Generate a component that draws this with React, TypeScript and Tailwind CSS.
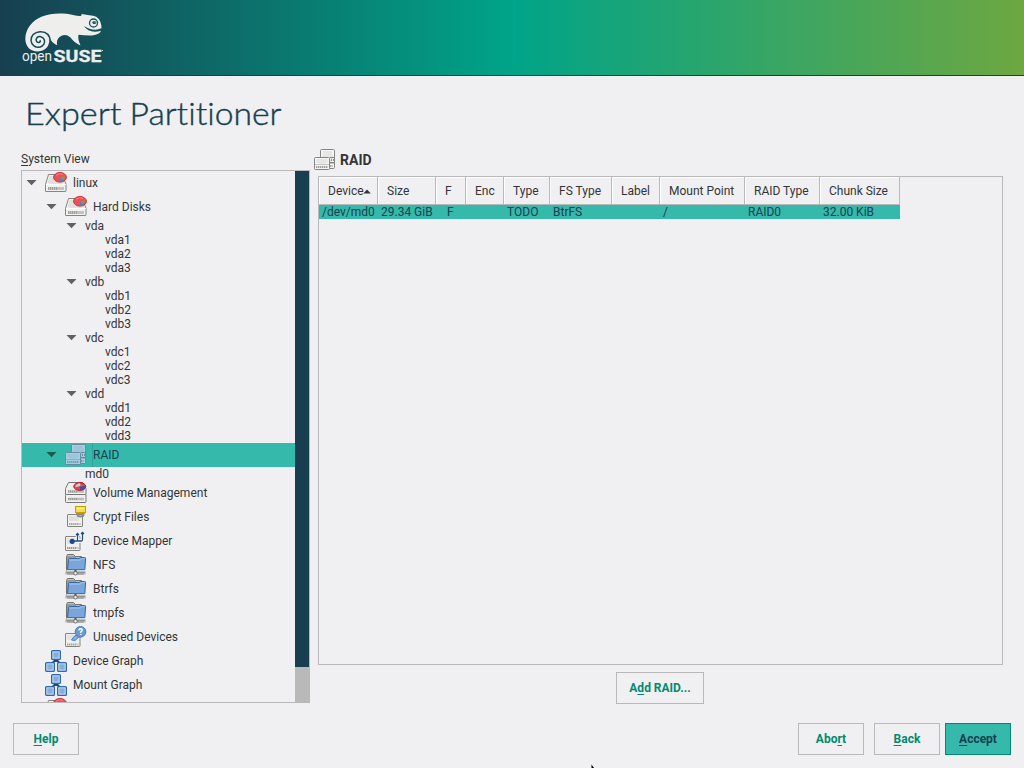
import React from "react";

type IconName = "disk" | "raid" | "volume" | "crypt" | "mapper" | "folder" | "unused" | "graph";

function Drive({ x, y, w, h }: { x: number; y: number; w: number; h: number }) {
  return (
    <g>
      <rect x={x + 0.5} y={y + 0.5} width={w - 1} height={h - 1} rx="1" fill="#f5f5f4" stroke="#858683" />
      <path d={`M${x + 3} ${y + 2}h${w - 6}l1 ${h - 10}q${-(w - 4) / 2} 4 ${-(w - 4)} 0z`} fill="#e6e7e5" />
      <path d={`M${x + 1} ${y + h - 5.5}h${w - 2}`} stroke="#c3c4c1" />
      <path d={`M${x + 2} ${y + h - 3}h${w - 4}`} stroke="#cfd0cd" strokeWidth="2" />
      <path d={`M${x + 2} ${y + h - 3}h${w - 5}`} stroke="#a2a3a0" strokeWidth="2" strokeDasharray="1 1" />
    </g>
  );
}

function RedChart({ cx, cy, rx, ry }: { cx: number; cy: number; rx: number; ry: number }) {
  return (
    <g>
      <ellipse cx={cx} cy={cy} rx={rx} ry={ry} fill="#ee5058" stroke="#d42833" />
      <path d={`M${cx} ${cy}l${rx - 1} -1q-.5 3-3 ${ry - 1}z`} fill="#7aa05e" />
      <path d={`M${cx} ${cy}l3.5 ${ry - 1}q-2.5 1-4 .5z`} fill="#4e82c0" />
      <path d={`M${cx - 4} ${cy - 2}q3-3 7-1`} stroke="#f8898d" fill="none" />
    </g>
  );
}

function Icon({ name }: { name: IconName }) {
  return (
    <svg width="24" height="24" viewBox="0 0 24 24" className="shrink-0">
      {name === "disk" && (
        <g>
          <path d="M4.500 3.500h14l3.500 10v6.500q0 .5-.5.5H2q-.5 0-.5-.5v-6.500z" fill="#f2f2ef" stroke="#858580" strokeLinejoin="round" />
          <path d="M4 12l1.500-7h12l2.500 7q-8 3-16 0z" fill="#e0e0dd" />
          <path d="M2 13.500h20" stroke="#fff" />
          <path d="M4 17.500h16" stroke="#c3c3c0" strokeWidth="3" />
          <path d="M4 17.500h10" stroke="#a0a09d" strokeWidth="3" strokeDasharray="1 1" />
          <RedChart cx={16} cy={6.3} rx={6.4} ry={4.8} />
        </g>
      )}
      {name === "raid" && (
        <g>
          <Drive x={7} y={1} w={15} h={20} />
          <path d="M17 9.500h4M17 14.500h4" stroke="#858683" />
          <path d="M18 12h3" stroke="#969794" strokeWidth="2" strokeDasharray="1 1" />
          <Drive x={1} y={9} w={16} h={13} />
        </g>
      )}
      {name === "volume" && (
        <g>
          <path d="M4.500 1.500h14l3.500 6v6H1.500v-6z" fill="#efefed" stroke="#777" />
          <rect x="1.500" y="13.500" width="20.500" height="8" rx="1" fill="#efefed" stroke="#777" />
          <path d="M4 10.500h16M4 18h16" stroke="#bbb" strokeWidth="2.500" />
          <path d="M4 10.500h10M4 18h10" stroke="#999" strokeWidth="2" strokeDasharray="1 1" />
          <ellipse cx="15.800" cy="5.500" rx="6" ry="3.900" fill="#e8444c" stroke="#b41824" />
          <path d="M15.500 5.500l6-.5q.5 3-3 4.300h-2z" fill="#3258a0" />
          <path d="M11 6.300q1-4 5-4l.5 2.800z" fill="#cdcdd4" />
        </g>
      )}
      {name === "crypt" && (
        <g>
          <path d="M3.500 10q0-.5.5-.5h14.500v11.500q0 .5-.5.5H4q-.5 0-.5-.5z" fill="#f0f0ee" stroke="#858580" />
          <path d="M5 11h10v5H5z" fill="#dfdfdd" />
          <path d="M5 19h12" stroke="#ccc" strokeWidth="2" />
          <path d="M5 19h10" stroke="#aaa" strokeWidth="2" strokeDasharray="1 1" />
          <path d="M13.500 7v2.500q0 2 3 2t3-2V7" stroke="#888a85" strokeWidth="2" fill="none" />
          <rect x="11.500" y="1.500" width="10" height="6" fill="#f5de4d" stroke="#c4a000" />
          <path d="M13 3.500h7" stroke="#fff397" />
          <path d="M12 8.500h9" stroke="#aa9440" />
        </g>
      )}
      {name === "mapper" && (
        <g>
          <path d="M1.500 8q0-.5.5-.5h14v13.500q0 .5-.5.5H2q-.5 0-.5-.5z" fill="#f0f0ee" stroke="#858580" />
          <path d="M3 9h11v6H3z" fill="#e3e3e1" />
          <path d="M3 19h12" stroke="#ccc" strokeWidth="2" />
          <path d="M3 19h10" stroke="#999" strokeWidth="2" strokeDasharray="1 1" />
          <path d="M8 12h5.500v-8M13.500 12h4q1 0 1-1.500V4" fill="none" stroke="#fff" strokeWidth="3.500" />
          <circle cx="8.200" cy="12.300" r="2.600" fill="#204a87" />
          <path d="M8 12h5.500v-7.500M13.500 12h4q1 0 1-1.500V3.500M12 6l1.500-1.500L15 6M17 5l1.500-1.500L20 5" fill="none" stroke="#204a87" strokeWidth="1.300" />
        </g>
      )}
      {name === "folder" && (
        <g>
          <path d="M2.500 17.500v-14l1-2h6l2 2h6v3" fill="#bfc2ba" stroke="#71746e" />
          <path d="M3 4h9M3 6h3M3 8h2M3 10h2M3 12h2M3 14h2" stroke="#555753" strokeWidth=".7" />
          <path d="M4.500 6.500q0-1 1-1H15q1 0 1.500-1h4q1.200 0 1.100 1.200l-.8 11H3.500z" fill="#7ba6d9" stroke="#3465a4" strokeLinejoin="round" />
          <path d="M5.500 7H15.500q1 0 2-1.300h3" fill="none" stroke="#a8c8ef" />
          <path d="M1 20h21" stroke="#c4c4c4" strokeWidth="3" />
          <path d="M2 19.200h19M3 21h17" stroke="#6e706c" strokeWidth=".8" />
          <path d="M11.500 17v3" stroke="#555" strokeWidth="2" />
          <circle cx="11.500" cy="20.200" r="1.800" fill="#eee" stroke="#555753" strokeWidth=".8" />
        </g>
      )}
      {name === "unused" && (
        <g>
          <path d="M1.500 9q0-.5.5-.5h14v12.500q0 .5-.5.5H2q-.5 0-.5-.5z" fill="#f0f0ee" stroke="#858580" />
          <path d="M3 10h10v5H3z" fill="#e3e3e1" />
          <path d="M3 19.500h12" stroke="#ccc" strokeWidth="2" />
          <path d="M3 19.500h10" stroke="#aaa" strokeWidth="2" strokeDasharray="1 1" />
          <path d="M13.500 9.500l-3.500 2-2.500 3.500 3.500.5 4.500-4z" fill="#86ade0" stroke="#4b82c2" />
          <circle cx="16.500" cy="6.800" r="5.300" fill="#6c9bd2" stroke="#427bbf" />
          <path d="M14.800 5.300q.2-1.600 1.900-1.600 1.600 0 1.600 1.400 0 1-1.500 1.700v1.200M16.800 8.900v1.200" fill="none" stroke="#fff" strokeWidth="1.400" />
        </g>
      )}
      {name === "graph" && (
        <g>
          <path d="M12 10v2M12 10.500L8.500 14M12 10.500l3.500 3.500" stroke="#204a87" strokeWidth="2.200" fill="none" />
          <g fill="#86aedd" stroke="#2f68aa" strokeWidth="1.200">
            <rect x="7.600" y="1.600" width="8.800" height="8.800" rx="1" />
            <rect x="1.600" y="13.600" width="8.800" height="8.800" rx="1" />
            <rect x="13.600" y="13.600" width="8.800" height="8.800" rx="1" />
          </g>
          <g fill="none" stroke="#c2d8f1" strokeWidth=".9">
            <rect x="8.900" y="2.900" width="6.200" height="6.200" />
            <rect x="2.900" y="14.900" width="6.200" height="6.200" />
            <rect x="14.900" y="14.900" width="6.200" height="6.200" />
          </g>
        </g>
      )}
    </svg>
  );
}

type Row = { label: string; pad: string; arrow?: boolean; icon?: IconName; selected?: boolean };

const disk = (n: string): Row[] => [
  { label: n, pad: "pl-[43px]", arrow: true },
  { label: n + "1", pad: "pl-[83px]" },
  { label: n + "2", pad: "pl-[83px]" },
  { label: n + "3", pad: "pl-[83px]" },
];

const rows: Row[] = [
  { label: "linux", pad: "pl-[3px]", arrow: true, icon: "disk" },
  { label: "Hard Disks", pad: "pl-[23px]", arrow: true, icon: "disk" },
  ...disk("vda"),
  ...disk("vdb"),
  ...disk("vdc"),
  ...disk("vdd"),
  { label: "RAID", pad: "pl-[23px]", arrow: true, icon: "raid", selected: true },
  { label: "md0", pad: "pl-[63px]" },
  { label: "Volume Management", pad: "pl-[43px]", icon: "volume" },
  { label: "Crypt Files", pad: "pl-[43px]", icon: "crypt" },
  { label: "Device Mapper", pad: "pl-[43px]", icon: "mapper" },
  { label: "NFS", pad: "pl-[43px]", icon: "folder" },
  { label: "Btrfs", pad: "pl-[43px]", icon: "folder" },
  { label: "tmpfs", pad: "pl-[43px]", icon: "folder" },
  { label: "Unused Devices", pad: "pl-[43px]", icon: "unused" },
  { label: "Device Graph", pad: "pl-[23px]", icon: "graph" },
  { label: "Mount Graph", pad: "pl-[23px]", icon: "graph" },
  { label: "", pad: "pl-[23px]", icon: "disk" },
];

function TreeRow({ row }: { row: Row }) {
  return (
    <div
      className={`flex shrink-0 items-center ${row.icon ? "h-6" : "h-[14px]"} ${row.pad} ${
        row.selected ? "bg-[#35b9ab] text-[#173f4f]" : ""
      }`}
    >
      {row.arrow && (
        <svg width="20" height="10" viewBox="0 0 20 10" className="shrink-0">
          <path d="M1.500 2h10L6.500 7.300z" fill={row.selected ? "#24584f" : "#5f6163"} />
        </svg>
      )}
      {row.icon && (
        <span className={`-ml-px flex shrink-0 ${row.selected ? "mr-1" : "mr-[5px]"}`}>
          {row.selected ? (
            <span className="relative flex">
              <Icon name={row.icon} />
              <svg width="24" height="24" className="absolute inset-0">
                <path d="M7 1h15v20h-5v1H1V9h6z" fill="#3a97c9" fillOpacity=".42" />
              </svg>
            </span>
          ) : (
            <Icon name={row.icon} />
          )}
        </span>
      )}
      <span className={row.selected ? "flex h-6 flex-1 items-center border-l border-[#2fa598]" : ""}>{row.label}</span>
    </div>
  );
}

const columns = [
  { title: "Device", cell: "/dev/md0", w: "w-[59px]", cp: "pl-[3px]" },
  { title: "Size", cell: "29.34 GiB", w: "w-[58px]", cp: "pl-[3px]" },
  { title: "F", cell: "F", w: "w-[30px]", cp: "pl-[11px]" },
  { title: "Enc", cell: "", w: "w-[38px]", cp: "" },
  { title: "Type", cell: "TODO", w: "w-[46px]", cp: "pl-[3px]" },
  { title: "FS Type", cell: "BtrFS", w: "w-[62px]", cp: "pl-[3px]" },
  { title: "Label", cell: "", w: "w-[48px]", cp: "" },
  { title: "Mount Point", cell: "/", w: "w-[85px]", cp: "pl-[3px]" },
  { title: "RAID Type", cell: "RAID0", w: "w-[75px]", cp: "pl-[3px]" },
  { title: "Chunk Size", cell: "32.00 KiB", w: "w-[80px]", cp: "pl-[3px]" },
];

function Key({ children }: { children: React.ReactNode }) {
  return <span className="underline decoration-1 underline-offset-2 [text-decoration-skip-ink:none]">{children}</span>;
}

function Button({ className = "", children }: { className?: string; children: React.ReactNode }) {
  return (
    <button
      className={`flex h-8 items-center justify-center border font-bold ${className}`}
    >
      <span>{children}</span>
    </button>
  );
}

function Logo() {
  return (
    <svg width="110" height="75" viewBox="0 0 110 75" fill="#eeeeec">
      <path d="M25.300 39C25.500 29 32 20.500 42 16.500C51 13 63 12.800 73 15Q78 16.300 81 16L81.800 14Q88 15.200 93 15.800Q100 17 101.300 25L101.500 28.300Q93 32 84 26Q89 34 101 30.800Q100 34.700 92 35.400Q84 35.500 78.500 34.800Q77.500 39 80.500 45.500Q74.500 43 70.500 37.500Q65 33 59.500 37Q56 40 57.200 45.200Q52 43.500 49.500 37.500Q50 50.500 37.800 51.500Q26 51 25.300 39z" />
      <path d="M50.500 42C50 34 45 31.500 40 31.700C34 32 30.800 36 31 40.500C31.500 45.500 35.500 47.700 39.500 47.200C43.500 46.500 45.300 43 44.300 39.700C43 36.400 39 35.600 36.900 37.800C35.200 40 36.500 42.700 38.800 42.500Q40.500 42.200 40.300 40.200" fill="none" stroke="#154b56" strokeWidth="1.500" />
      <circle cx="93.500" cy="23" r="4" stroke="#145159" strokeWidth="1.300" />
      <ellipse cx="94.300" cy="22.500" rx="1.900" ry="1.500" fill="#145159" />
      <circle cx="95" cy="22" r=".6" />
      <text x="22" y="61" fontFamily="Roboto, sans-serif" fontWeight="400" fontSize="15.500" textLength="30" lengthAdjust="spacingAndGlyphs">open</text>
      <text x="53.500" y="61.500" fontFamily="Roboto, sans-serif" fontWeight="700" fontSize="16.500" stroke="#eeeeec" strokeWidth=".3" textLength="48" lengthAdjust="spacingAndGlyphs">SUSE</text>
      <circle cx="102.500" cy="50.500" r=".6" />
    </svg>
  );
}

export default function App() {
  return (
    <div className="relative flex h-[768px] w-[1024px] flex-col overflow-hidden bg-[#f0f0f3] font-['Roboto',sans-serif] text-[12px] leading-[14px] text-[#333536]">
      <header className="h-[76px] shrink-0 border-b border-[#173f4f] bg-[linear-gradient(to_right,#173f4f_0%,#00a489_50%,#6da741_100%)]">
        <Logo />
      </header>
      <h1 className="flex h-[75px] shrink-0 items-center pl-[25px] text-[#173f4f]">
        <svg width="270" height="50" viewBox="0 0 270 50" fill="#173f4f" stroke="#173f4f" strokeWidth=".4" className="font-['Lato'] text-[32px] font-light [font-variant-ligatures:none]">
          <text x="0" y="36" textLength="96.500" lengthAdjust="spacingAndGlyphs">Expert</text>
          <text x="104.500" y="36" textLength="152" lengthAdjust="spacingAndGlyphs">Partitioner</text>
        </svg>
      </h1>
      <main className="flex h-[553px] shrink-0 pl-[21px]">
        <section className="w-[289px] shrink-0">
          <div className="h-[19px] pt-[1px]"><Key>S</Key>ystem View</div>
          <div className="flex h-[533px] border border-[#b9b9b9]">
            <div className="flex min-w-0 flex-1 flex-col overflow-hidden">
              {rows.map((row, i) => <TreeRow key={i} row={row} />)}
            </div>
            <div className="w-[14px] shrink-0 bg-[#b9b9b9]">
              <div className="h-[496px] bg-[#173f4f]" />
            </div>
          </div>
        </section>
        <section className="ml-[3px] flex w-[690px] flex-col">
          <div className="flex h-[25px] shrink-0 items-center pb-[7px] text-[14px] font-bold">
            <Icon name="raid" />
            <h2 className="ml-[3px]">RAID</h2>
          </div>
          <div className="ml-[5px] h-[489px] w-[685px] shrink-0 border border-[#b9b9b9]">
            <div className="flex h-7">
              {columns.map((c, i) => (
                <div key={c.title} className={`flex shrink-0 items-center border-r border-b border-[#b9b9b9] pl-[9px] shadow-[inset_1px_1px_0_#fff] ${c.w}`}>
                  {c.title}
                  {i === 0 && (
                    <svg width="8" height="5" viewBox="0 0 8 5" className="-ml-px mt-[2px] shrink-0"><path d="M.3 4.500h7.500L4 .5z" fill="#333536" /></svg>
                  )}
                </div>
              ))}
            </div>
            <div className="flex h-[14px] w-[581px] bg-[#35b9ab] text-[#173f4f]">
              {columns.map((c) => <div key={c.title} className={`shrink-0 whitespace-nowrap ${c.w} ${c.cp}`}>{c.cell}</div>)}
            </div>
          </div>
          <div className="flex shrink-0 pt-[7px] pl-[303px]">
            <Button className="w-[88px] border-[#b9b9b9] text-[#008a70]">A<Key>d</Key>d RAID...</Button>
          </div>
        </section>
      </main>
      <footer className="flex pt-[19px] pl-[13px]">
        <Button className="w-[66px] border-[#b9b9b9] text-[#008a70]"><Key>H</Key>elp</Button>
        <Button className="ml-[719px] w-[66px] border-[#b9b9b9] text-[#008a70]">Abo<Key>r</Key>t</Button>
        <Button className="ml-[10px] w-[66px] border-[#b9b9b9] text-[#008a70]"><Key>B</Key>ack</Button>
        <Button className="ml-[5px] w-[66px] border-[#008a70] bg-[#35b9ab] text-[#173f4f]"><Key>A</Key>ccept</Button>
      </footer>
      <svg width="10" height="16" viewBox="0 0 10 16" className="absolute top-[764px] left-[591px]">
        <path d="M.5.5v14l3-3h5z" fill="#000" />
      </svg>
    </div>
  );
}
